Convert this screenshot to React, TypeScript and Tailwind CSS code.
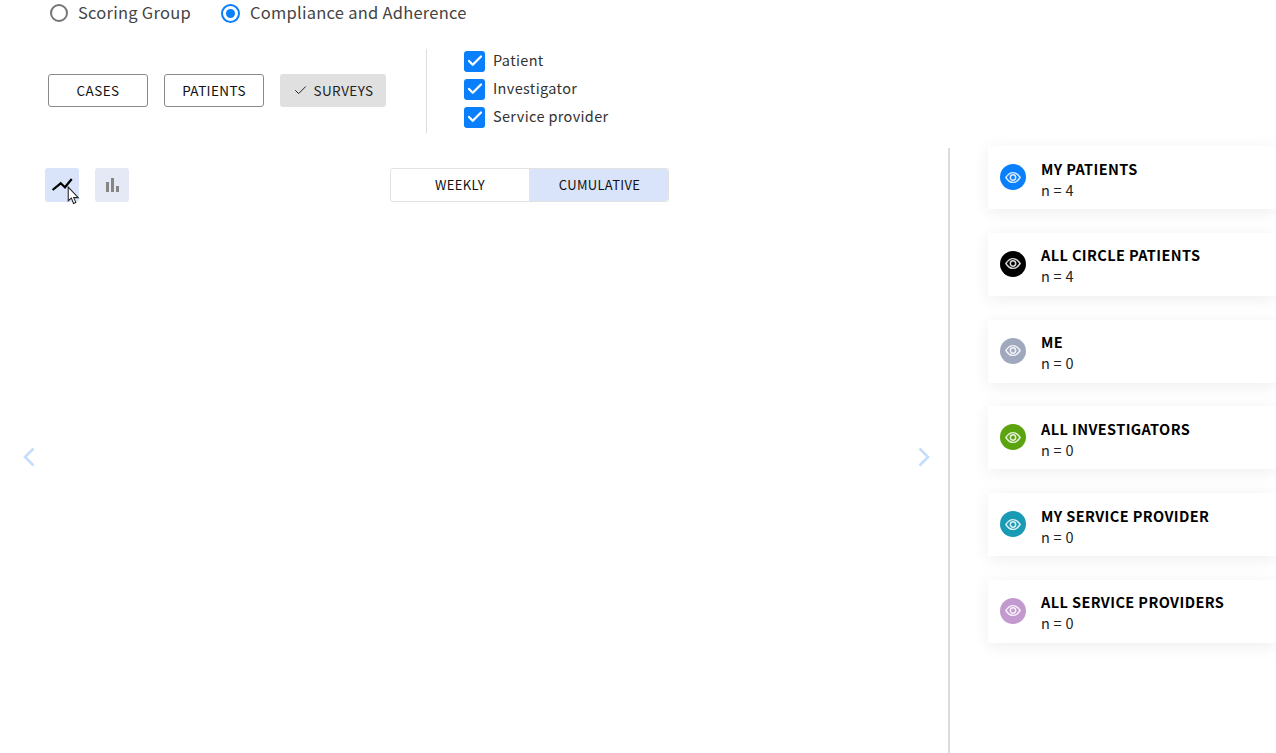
import { Check } from 'lucide-react'

const fontStack = { fontFamily: '"Noto Sans CJK JP", "Noto Sans", sans-serif' }

const groups = [
  { name: 'MY PATIENTS', count: 4, color: 'bg-[#0a7ffb]' },
  { name: 'ALL CIRCLE PATIENTS', count: 4, color: 'bg-black' },
  { name: 'ME', count: 0, color: 'bg-[#a0a8be]' },
  { name: 'ALL INVESTIGATORS', count: 0, color: 'bg-[#5ba30f]' },
  { name: 'MY SERVICE PROVIDER', count: 0, color: 'bg-[#1a9bb5]' },
  { name: 'ALL SERVICE PROVIDERS', count: 0, color: 'bg-[#c39ad0]' },
]

function CheckRow({ label }: { label: string }) {
  return (
    <label className="flex items-center h-[28px]">
      <span className="w-[21px] h-[21px] rounded-[3px] bg-[#0a7ffb] flex items-center justify-center">
        <Check className="w-[18px] h-[18px] text-white" strokeWidth={3} />
      </span>
      <span className="ml-[8px] -mt-[2px] text-[14.5px] text-[#333] tracking-[0.35px]">{label}</span>
    </label>
  )
}

function EyeIcon() {
  return (
    <svg viewBox="0 0 18 14" className="w-[16px] h-[13px]" fill="none" stroke="#fff" strokeOpacity="0.85">
      <path d="M1 7 C3.5 3 6 1.5 9 1.5 C12 1.5 14.5 3 17 7 C14.5 11 12 12.5 9 12.5 C6 12.5 3.5 11 1 7 Z" strokeWidth="1.6" />
      <circle cx="9" cy="7" r="3" strokeWidth="1.7" />
    </svg>
  )
}

function GroupCard({ name, count, color }: { name: string; count: number; color: string }) {
  return (
    <div className="h-[63px] bg-white flex items-center pl-[12px] shadow-[0_3px_16px_rgba(0,0,0,0.07)]">
      <div className={`w-[26px] h-[26px] -mt-[1px] rounded-full flex items-center justify-center ${color}`}>
        <EyeIcon />
      </div>
      <div className="ml-[15px] mt-[3px]">
        <div className="text-[14.5px] leading-[20px] font-bold text-black tracking-[0.4px]">{name}</div>
        <div className="text-[14.5px] leading-[21px] text-[#222] tracking-[0.25px]">n = {count}</div>
      </div>
    </div>
  )
}

export default function App() {
  return (
    <div className="w-[1276px] h-[753px] overflow-hidden bg-white flex flex-col" style={fontStack}>
      {/* Radio row */}
      <div className="h-[26px] flex items-center pl-[50px] text-[16.5px] text-[#444] tracking-[0.25px]">
        <span className="w-[18px] h-[18px] rounded-full border-2 border-[#757575]" />
        <span className="ml-[10px] -mt-[2px]">Scoring Group</span>
        <span className="ml-[30px] w-[19px] h-[19px] rounded-full border-2 border-[#0a7ffb] flex items-center justify-center">
          <span className="w-[9px] h-[9px] rounded-full bg-[#0a7ffb]" />
        </span>
        <span className="ml-[10px] -mt-[2px]">Compliance and Adherence</span>
      </div>

      {/* Filters */}
      <div className="mt-[23px] h-[84px] flex items-center pl-[48px]">
        <div className="flex items-center gap-[16px] text-[13.5px] text-[#111] tracking-[0.4px] -mt-[2px]">
          <button className="w-[100px] h-[33px] rounded-[3px] border border-[#8a8a8a] bg-white pt-[1px]">CASES</button>
          <button className="w-[100px] h-[33px] rounded-[3px] border border-[#8a8a8a] bg-white pt-[1px]">PATIENTS</button>
          <button className="w-[106px] h-[33px] rounded-[3px] bg-[#e0e0e0] flex items-center justify-center text-[#222] pt-[1px]">
            <Check className="w-[15px] h-[15px] mr-[6px]" strokeWidth={1.6} />
            SURVEYS
          </button>
        </div>
        <div className="ml-[40px] w-px h-full bg-[#dedede]" />
        <div className="ml-[37px] flex flex-col -mt-[4px]">
          <CheckRow label="Patient" />
          <CheckRow label="Investigator" />
          <CheckRow label="Service provider" />
        </div>
      </div>

      {/* Main area */}
      <div className="mt-[15px] flex-1 flex min-h-0">
        <div className="w-[948px] relative">
          <div className="pt-[20px] pl-[45px] flex">
            <button className="relative w-[34px] h-[34px] rounded-[3px] bg-[#d9e4fb] flex items-center justify-center">
              <svg viewBox="0 0 24 24" className="w-[24px] h-[24px]" fill="none" stroke="#000" strokeWidth="2.2">
                <path d="M2.6 17 L10.7 10.3 L15 14.3 L21.7 6" />
              </svg>
              <svg viewBox="0 0 12 18" className="absolute left-[22px] top-[18px] w-[13px] h-[19px]">
                <path d="M1 1 L1 14 L4 11.5 L6 16.5 L8.2 15.5 L6.2 11 L10.5 11 Z" fill="#fff" stroke="#222" strokeWidth="1" />
              </svg>
            </button>
            <button className="ml-[16px] w-[34px] h-[34px] rounded-[3px] bg-[#e4e9f5] flex items-end justify-center gap-[2px] pb-[10px]">
              <span className="w-[3px] h-[10px] bg-[#858585]" />
              <span className="w-[3px] h-[14px] bg-[#858585]" />
              <span className="w-[3px] h-[6px] bg-[#858585]" />
            </button>
            <div className="ml-[261px] w-[279px] h-[34px] rounded-[3px] border border-[#e2e2e2] flex text-[13px] text-[#111] tracking-[0.3px]">
              <div className="w-[138px] flex items-center justify-center bg-white rounded-l-[3px]">WEEKLY</div>
              <div className="flex-1 flex items-center justify-center bg-[#d9e4fb] rounded-r-[3px] pl-[2px]">CUMULATIVE</div>
            </div>
          </div>
          <svg viewBox="0 0 12 20" className="absolute left-[23px] top-[299px] w-[12px] h-[20px]" fill="none" stroke="#c6dcfd" strokeWidth="2.6">
            <path d="M10.5 1.5 L2 10 L10.5 18.5" />
          </svg>
          <svg viewBox="0 0 12 20" className="absolute left-[918px] top-[299px] w-[12px] h-[20px]" fill="none" stroke="#c6dcfd" strokeWidth="2.6">
            <path d="M1.5 1.5 L10 10 L1.5 18.5" />
          </svg>
        </div>
        <div className="w-[2px] bg-[#dcdcdc]" />
        <div className="flex-1 pl-[38px] -mt-[2px] flex flex-col gap-[23.8px]">
          {groups.map((g) => (
            <GroupCard key={g.name} {...g} />
          ))}
        </div>
      </div>
    </div>
  )
}
